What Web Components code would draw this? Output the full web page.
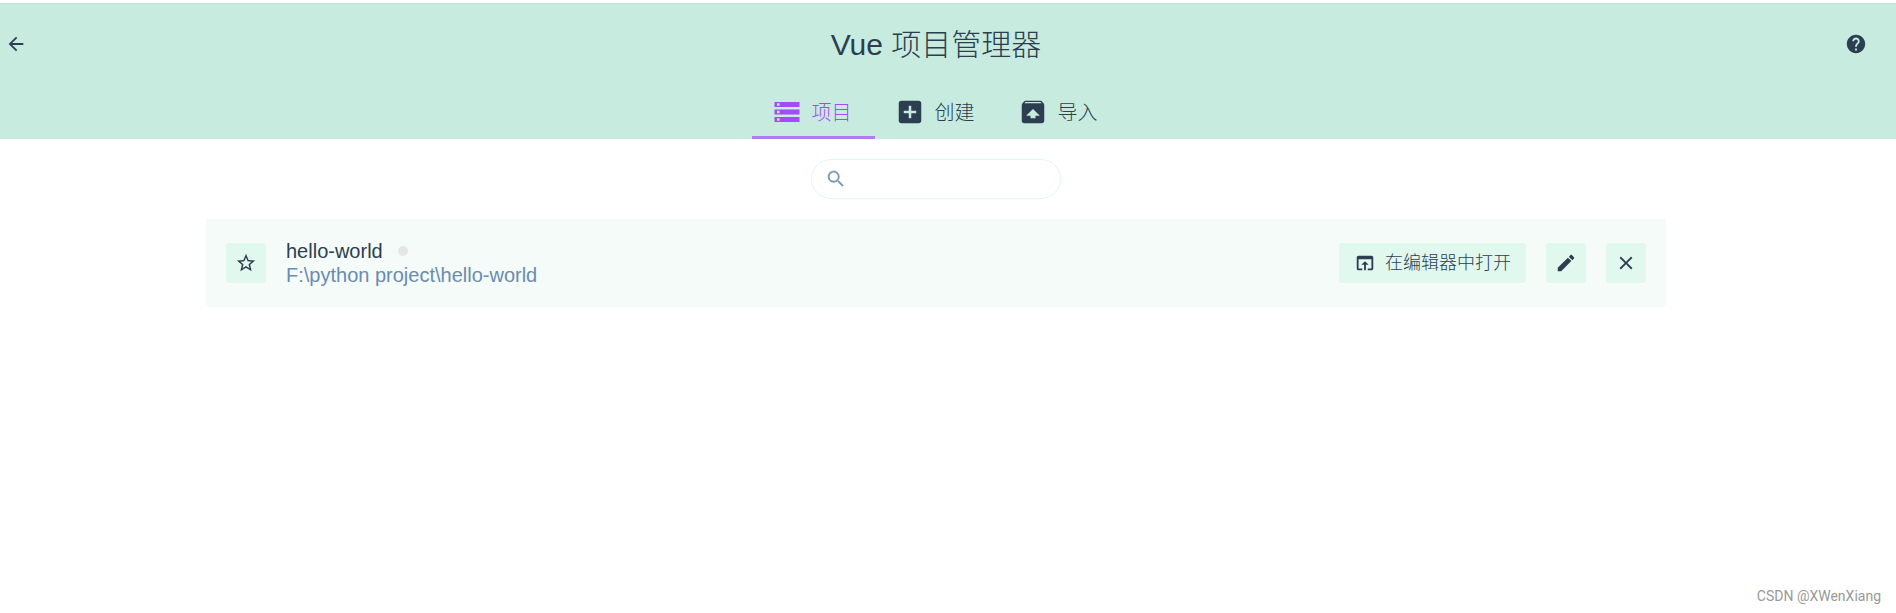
<!DOCTYPE html>
<html lang="zh-CN">
<head>
<meta charset="utf-8">
<title>Vue 项目管理器</title>
<style>
html, body {
  margin: 0;
  height: 100%;
}
body {
  font-family: "Liberation Sans", "Noto Sans CJK SC", sans-serif;
  font-weight: 300;
  font-size: 20px;
  line-height: 24px;
  color: #2c3e50;
  background-color: #fff;
  --header: #c7ebdf;
  --accent: #a44bf7;
  --accent-line: #b07cee;
  --button: #e0f8ed;
  --row: #f4fbf8;
  --muted: #6b8bb0;
}
</style>
</head>
<body>
<project-manager>
  <manager-header slot="header" label="Vue 项目管理器">
    <nav-tab icon="storage" active>项目</nav-tab>
    <nav-tab icon="add">创建</nav-tab>
    <nav-tab icon="unarchive">导入</nav-tab>
  </manager-header>
  <search-box label="搜索"></search-box>
  <project-item path="F:\python project\hello-world">hello-world</project-item>
  <span slot="footer">CSDN @XWenXiang</span>
</project-manager>

<script>
const icons = {
  back: "M20 11H7.83l5.59-5.59L12 4l-8 8 8 8 1.41-1.41L7.83 13H20v-2z",
  help: "M12 2C6.48 2 2 6.48 2 12s4.48 10 10 10 10-4.48 10-10S17.52 2 12 2zm1 17h-2v-2h2v2zm2.07-7.75l-.9.92C13.45 12.9 13 13.5 13 15h-2v-.5c0-1.1.45-2.1 1.17-2.83l1.24-1.26c.37-.36.59-.86.59-1.41 0-1.1-.9-2-2-2s-2 .9-2 2H8c0-2.21 1.79-4 4-4s4 1.79 4 4c0 .88-.36 1.68-.93 2.25z",
  storage: "M2 20h20v-4H2v4zm2-3h2v2H4v-2zM2 4v4h20V4H2zm4 3H4V5h2v2zm-4 7h20v-4H2v4zm2-3h2v2H4v-2z",
  add: "M19 3H5c-1.11 0-2 .9-2 2v14c0 1.1.89 2 2 2h14c1.1 0 2-.9 2-2V5c0-1.1-.9-2-2-2zm-2 10h-4v4h-2v-4H7v-2h4V7h2v4h4v2z",
  unarchive: "M20.55 5.22l-1.39-1.68C18.88 3.21 18.47 3 18 3H6c-.47 0-.88.21-1.15.55L3.46 5.22C3.17 5.57 3 6.01 3 6.5V19c0 1.1.89 2 2 2h14c1.1 0 2-.9 2-2V6.5c0-.49-.17-.93-.45-1.28zM12 9.5l5.5 5.5H14v2h-4v-2H6.5L12 9.5zM5.12 5l.82-1h12l.93 1H5.12z",
  search: "M15.5 14h-.79l-.28-.27C15.41 12.59 16 11.11 16 9.5 16 5.91 13.09 3 9.5 3S3 5.91 3 9.5 5.91 16 9.5 16c1.61 0 3.09-.59 4.23-1.57l.27.28v.79l5 4.99L20.49 19l-4.99-5zm-6 0C7.01 14 5 11.99 5 9.5S7.01 5 9.5 5 14 7.01 14 9.5 11.99 14 9.5 14z",
  star: "M22 9.24l-7.19-.62L12 2 9.19 8.63 2 9.24l5.46 4.73L5.82 21 12 17.27 18.18 21l-1.63-7.03L22 9.24zM12 15.4l-3.76 2.27 1-4.28-3.32-2.88 4.38-.38L12 6.1l1.71 4.04 4.38.38-3.32 2.88 1 4.28L12 15.4z",
  open: "M19 4H5c-1.11 0-2 .9-2 2v12c0 1.1.89 2 2 2h4v-2H5V8h14v10h-4v2h4c1.1 0 2-.9 2-2V6c0-1.1-.89-2-2-2zm-7 6l-4 4h3v6h2v-6h3l-4-4z",
  edit: "M3 17.25V21h3.75L17.81 9.94l-3.75-3.75L3 17.25zM20.71 7.04c.39-.39.39-1.02 0-1.41l-2.34-2.34c-.39-.39-1.02-.39-1.41 0l-1.83 1.83 3.75 3.75 1.83-1.83z",
  close: "M19 6.41L17.59 5 12 10.59 6.41 5 5 6.41 10.59 12 5 17.59 6.41 19 12 13.41 17.59 19 19 17.59 13.41 12z",
};

class MatIcon extends HTMLElement {
  constructor() {
    super();
    this.attachShadow({ mode: "open" });
  }
  connectedCallback() {
    this.shadowRoot.innerHTML = `
<style>
:host {
  display: block;
  flex: none;
  width: 22px;
  height: 22px;
}
svg {
  display: block;
  width: 100%;
  height: 100%;
  fill: currentColor;
}
</style>
<svg viewBox="0 0 24 24" aria-hidden="true"><path d="${icons[this.getAttribute("name")]}"/></svg>`;
  }
}
customElements.define("mat-icon", MatIcon);

class IconButton extends HTMLElement {
  constructor() {
    super();
    this.attachShadow({ mode: "open" });
  }
  connectedCallback() {
    this.shadowRoot.innerHTML = `
<style>
:host {
  display: block;
  flex: none;
}
button {
  display: flex;
  align-items: center;
  justify-content: center;
  gap: 9px;
  min-width: 40px;
  height: 40px;
  padding: 0;
  border: 0;
  border-radius: 3px;
  font: inherit;
  font-size: 18px;
  color: inherit;
  background-color: var(--button);
  cursor: pointer;
}
:host([wide]) button {
  padding: 0 15px;
}
:host([flat]) button {
  min-width: 32px;
  height: 32px;
  background-color: transparent;
}
</style>
<button type="button"><mat-icon name="${this.getAttribute("icon")}"></mat-icon><slot></slot></button>`;
    const label = this.getAttribute("label");
    if (label) {
      this.shadowRoot.querySelector("button").setAttribute("aria-label", label);
    }
  }
}
customElements.define("icon-button", IconButton);

class NavTab extends HTMLElement {
  constructor() {
    super();
    this.attachShadow({ mode: "open" });
  }
  connectedCallback() {
    this.shadowRoot.innerHTML = `
<style>
:host {
  display: block;
}
a {
  display: flex;
  align-items: center;
  gap: 10px;
  height: 54px;
  padding: 0 23px 0 20px;
  line-height: 30px;
  color: inherit;
  text-decoration: none;
}
span {
  padding-top: 2px;
}
mat-icon {
  width: 30px;
  height: 30px;
}
:host([active]) a {
  color: var(--accent);
  box-shadow: inset 0 -3px var(--accent-line);
}
</style>
<a href="#${this.getAttribute("icon")}"><mat-icon name="${this.getAttribute("icon")}"></mat-icon><span><slot></slot></span></a>`;
  }
}
customElements.define("nav-tab", NavTab);

class ManagerHeader extends HTMLElement {
  constructor() {
    super();
    this.attachShadow({ mode: "open" });
  }
  connectedCallback() {
    this.shadowRoot.innerHTML = `
<style>
:host {
  display: block;
  padding-right: 24px;
  border-top: 1px solid #cbdfd7;
  background-color: var(--header);
}
.top {
  display: flex;
  align-items: center;
  height: 80px;
  padding-bottom: 1px;
}
h1 {
  flex: 1;
  margin: 0;
  padding-top: 2px;
  font-size: 30px;
  font-weight: inherit;
  line-height: 40px;
  text-align: center;
}
nav {
  display: flex;
  justify-content: center;
}
</style>
<div class="top">
  <icon-button flat icon="back" label="返回"></icon-button>
  <h1></h1>
  <icon-button flat icon="help" label="帮助"></icon-button>
</div>
<nav><slot></slot></nav>`;
    this.shadowRoot.querySelector("h1").textContent = this.getAttribute("label");
  }
}
customElements.define("manager-header", ManagerHeader);

class SearchBox extends HTMLElement {
  constructor() {
    super();
    this.attachShadow({ mode: "open" });
  }
  connectedCallback() {
    this.shadowRoot.innerHTML = `
<style>
:host {
  display: block;
  width: 250px;
}
label {
  display: flex;
  align-items: center;
  gap: 8px;
  box-sizing: border-box;
  height: 40px;
  padding: 0 14px 0 13px;
  border: 1px solid var(--button);
  border-radius: 20px;
  color: #7b9cac;
}
input {
  flex: 1;
  min-width: 0;
  padding: 0;
  border: 0;
  outline: 0;
  font: inherit;
  color: #2c3e50;
  background: none;
}
</style>
<label><mat-icon name="search"></mat-icon><input type="text" aria-label="${this.getAttribute("label")}"></label>`;
  }
}
customElements.define("search-box", SearchBox);

class ProjectItem extends HTMLElement {
  constructor() {
    super();
    this.attachShadow({ mode: "open" });
  }
  connectedCallback() {
    this.shadowRoot.innerHTML = `
<style>
:host {
  display: flex;
  align-items: center;
  gap: 20px;
  box-sizing: border-box;
  width: 100%;
  max-width: 1460px;
  padding: 20px;
  background-color: var(--row);
}
.info {
  flex: 1;
  min-width: 0;
}
.name {
  display: flex;
  align-items: center;
  gap: 15px;
}
.status {
  width: 10px;
  height: 10px;
  border-radius: 50%;
  background-color: #e6e6e6;
}
.path {
  color: var(--muted);
}
</style>
<icon-button icon="star" label="收藏"></icon-button>
<div class="info">
  <div class="name"><slot></slot><span class="status"></span></div>
  <div class="path"></div>
</div>
<icon-button wide icon="open">在编辑器中打开</icon-button>
<icon-button icon="edit" label="重命名"></icon-button>
<icon-button icon="close" label="移除"></icon-button>`;
    this.shadowRoot.querySelector(".path").textContent = this.getAttribute("path");
  }
}
customElements.define("project-item", ProjectItem);

class ProjectManager extends HTMLElement {
  constructor() {
    super();
    this.attachShadow({ mode: "open" });
    this.shadowRoot.innerHTML = `
<style>
:host {
  display: flex;
  flex-direction: column;
  box-sizing: border-box;
  min-height: 100%;
  padding-top: 3px;
}
main {
  display: flex;
  flex: 1;
  flex-direction: column;
  align-items: center;
  gap: 20px;
  padding: 20px 24px 20px 0;
}
footer {
  padding: 0 15px 8px;
  font-family: Roboto, sans-serif;
  font-size: 14px;
  font-weight: 400;
  line-height: 18px;
  text-align: right;
  color: #999;
}
</style>
<slot name="header"></slot>
<main><slot></slot></main>
<footer><slot name="footer"></slot></footer>`;
  }
}
customElements.define("project-manager", ProjectManager);
</script>
</body>
</html>
